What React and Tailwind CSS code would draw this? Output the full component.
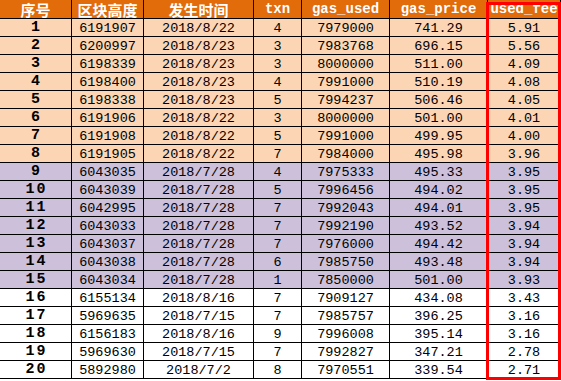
import React from "react";

const rows = [
  [1, "6191907", "2018/8/22", "4", "7979000", "741.29", "5.91"],
  [2, "6200997", "2018/8/23", "3", "7983768", "696.15", "5.56"],
  [3, "6198339", "2018/8/23", "3", "8000000", "511.00", "4.09"],
  [4, "6198400", "2018/8/23", "4", "7991000", "510.19", "4.08"],
  [5, "6198338", "2018/8/23", "5", "7994237", "506.46", "4.05"],
  [6, "6191906", "2018/8/22", "3", "8000000", "501.00", "4.01"],
  [7, "6191908", "2018/8/22", "5", "7991000", "499.95", "4.00"],
  [8, "6191905", "2018/8/22", "7", "7984000", "495.98", "3.96"],
  [9, "6043035", "2018/7/28", "4", "7975333", "495.33", "3.95"],
  [10, "6043039", "2018/7/28", "5", "7996456", "494.02", "3.95"],
  [11, "6042995", "2018/7/28", "7", "7992043", "494.01", "3.95"],
  [12, "6043033", "2018/7/28", "7", "7992190", "493.52", "3.94"],
  [13, "6043037", "2018/7/28", "7", "7976000", "494.42", "3.94"],
  [14, "6043038", "2018/7/28", "6", "7985750", "493.48", "3.94"],
  [15, "6043034", "2018/7/28", "1", "7850000", "501.00", "3.93"],
  [16, "6155134", "2018/8/16", "7", "7909127", "434.08", "3.43"],
  [17, "5969635", "2018/7/15", "7", "7985757", "396.25", "3.16"],
  [18, "6156183", "2018/8/16", "9", "7996008", "395.14", "3.16"],
  [19, "5969630", "2018/7/15", "7", "7992827", "347.21", "2.78"],
  [20, "5892980", "2018/7/2", "8", "7970551", "339.54", "2.71"],
];

const widths = ["w-[72px]", "w-[72px]", "w-[110px]", "w-[48px]", "w-[88px]", "w-[98px]", "w-[73px]"];

const cjk = "[font-family:'Noto_Sans_CJK_SC',sans-serif]";
const mono = "[font-family:'Liberation_Mono',monospace]";

function rowBg(n) {
  if (n <= 8) return "bg-[#fcd5b4]";
  if (n <= 15) return "bg-[#ccc0da]";
  return "bg-white";
}

export default function App() {
  const headers = [
    { t: "序号", f: cjk },
    { t: "区块高度", f: cjk },
    { t: "发生时间", f: cjk },
    { t: "txn", f: mono },
    { t: "gas_used", f: mono },
    { t: "gas_price", f: mono },
    { t: "used_fee", f: mono },
  ];
  return (
    <div className="relative w-[561px] h-[381px] bg-white overflow-hidden">
      <div className="relative z-10 flex h-[19px] bg-[#e26b0a]">
        {headers.map((h, i) => (
          <div
            key={i}
            className={`${widths[i]} shrink-0 h-full border-r border-b border-black flex items-start justify-center whitespace-nowrap text-white font-bold ${h.f} ${
              h.f === cjk ? "text-[15px] leading-[18px] pt-[1px]" : "text-[14px] leading-[13px] pt-[3px]"
            }`}
          >
            {h.t}
          </div>
        ))}
      </div>
      {rows.map((r) => (
        <div key={r[0]} className={`flex h-[18px] ${rowBg(r[0])}`}>
          {r.map((v, i) => (
            <div
              key={i}
              className={`${widths[i]} shrink-0 h-full border-r border-b border-black flex items-end justify-center pb-[1px] whitespace-nowrap text-black ${mono} leading-none ${
                i === 0 ? "font-bold text-[15px] tracking-[2px] pl-[2px]" : "text-[13.5px]"
              }`}
            >
              {v}
            </div>
          ))}
        </div>
      ))}
      <div className="absolute z-20 left-[486px] top-[2px] w-[75px] h-[378px] border-[3px] border-[#ff0000] pointer-events-none" />
    </div>
  );
}
